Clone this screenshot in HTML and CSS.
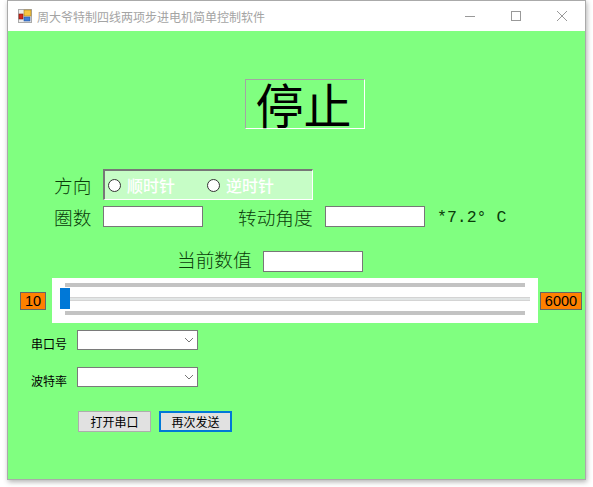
FILE: index.html
```html
<!DOCTYPE html>
<html>
<head>
    <meta charset="utf-8">
    <link rel="stylesheet" href="styles.css">
</head>
<body>
    <div class="window">
        <div class="titlebar">
            <svg class="app-icon" width="14" height="14" viewBox="0 0 14 14">
                <rect x="0.5" y="0.5" width="13" height="13" fill="#ececec" stroke="#aaa"/>
                <rect x="6" y="1" width="7" height="6" fill="#f5c542" stroke="#a87f1c" stroke-width="0.6"/>
                <rect x="1" y="5" width="4" height="5" fill="#d42a1e" stroke="#7d1510" stroke-width="0.6"/>
                <rect x="6" y="8" width="6" height="4" fill="#3f7fdc" stroke="#2a559a" stroke-width="0.6"/>
            </svg>
            <span class="title">周大爷特制四线两项步进电机简单控制软件</span>
            <div class="win-buttons">
                <svg width="11" height="12" viewBox="0 0 11 12"><path d="M0 6.5H10" stroke="#999" fill="none"/></svg>
                <svg width="11" height="12" viewBox="0 0 11 12"><rect x="0.5" y="1.5" width="9" height="9" stroke="#999" fill="none"/></svg>
                <svg width="11" height="12" viewBox="0 0 11 12"><path d="M0 1L10 11M10 1L0 11" stroke="#999" fill="none"/></svg>
            </div>
        </div>

        <div class="form">
            <div class="stop-row">
                <div class="stop-btn">停止</div>
            </div>

            <div class="row direction-row">
                <span class="label dir-label">方向</span>
                <div class="radio-group">
                    <span class="radio"></span><span class="radio-text">顺时针</span>
                    <span class="radio second"></span><span class="radio-text">逆时针</span>
                </div>
            </div>

            <div class="row turns-row">
                <span class="label dir-label">圈数</span>
                <input class="field" type="text">
                <span class="label angle-label">转动角度</span>
                <input class="field" type="text">
                <span class="label unit">*7.2° C</span>
            </div>

            <div class="row current-row">
                <span class="label">当前数值</span>
                <input class="field" type="text">
            </div>

            <div class="slider-row">
                <div class="limit">10</div>
                <div class="slider">
                    <div class="ticks"></div>
                    <div class="track"><div class="thumb"></div></div>
                    <div class="ticks"></div>
                </div>
                <div class="limit wide">6000</div>
            </div>

            <div class="row port-row">
                <span class="small-label">串口号</span>
                <div class="combo">
                    <svg width="10" height="6" viewBox="0 0 10 6"><path d="M1 1L5 5L9 1" stroke="#777" fill="none"/></svg>
                </div>
            </div>
            <div class="row baud-row">
                <span class="small-label">波特率</span>
                <div class="combo">
                    <svg width="10" height="6" viewBox="0 0 10 6"><path d="M1 1L5 5L9 1" stroke="#777" fill="none"/></svg>
                </div>
            </div>

            <div class="row button-row">
                <div class="button">打开串口</div>
                <div class="button focused">再次发送</div>
            </div>
        </div>
    </div>
</body>
</html>
```

FILE: styles.css
```css
html, body {
    margin: 0;
    background: #fff;
}

body {
    width: 593px;
    height: 487px;
    overflow: hidden;
    font-family: "Noto Sans CJK SC", "Liberation Sans", sans-serif;
}

.window {
    box-sizing: border-box;
    width: 579px;
    height: 480px;
    margin-left: 7px;
    border: 1px solid #aaa;
    box-shadow: 1px 2px 5px rgba(0, 0, 0, 0.3);
    display: flex;
    flex-direction: column;
}

.titlebar {
    height: 30px;
    flex: none;
    background: #fff;
    display: flex;
    align-items: center;
    padding-left: 10px;
}

.app-icon {
    margin-right: 5px;
}

.title {
    font-size: 12px;
    color: #a4a4a4;
}

.win-buttons {
    margin-left: auto;
    display: flex;
    gap: 35px;
    padding-right: 17px;
}

.form {
    flex: 1;
    background: #80ff80;
    display: flex;
    flex-direction: column;
}

.stop-row {
    padding: 48px 0 0 237px;
}

.stop-btn {
    box-sizing: border-box;
    width: 120px;
    height: 50px;
    padding-right: 3px;
    border: 1px solid;
    border-color: #a4a4a4 #fff #fff #a4a4a4;
    font-size: 48px;
    line-height: 46px;
    text-align: center;
    color: #000;
}

.row {
    display: flex;
    align-items: center;
}

.label {
    font-size: 18.67px;
    line-height: 20px;
    font-weight: 300;
    color: #0a3c0a;
    white-space: nowrap;
}

.direction-row {
    margin-top: 40px;
    padding-left: 46px;
}

.dir-label {
    width: 49px;
}

.radio-group {
    box-sizing: border-box;
    width: 210px;
    height: 31px;
    background: #c6fdc6;
    border: 1px solid;
    border-color: #777 #fff #fff #777;
    border-top-width: 2px;
    border-left-width: 2px;
    display: flex;
    align-items: center;
    padding-left: 3px;
}

.radio {
    box-sizing: border-box;
    width: 13px;
    height: 13px;
    border: 1px solid #333;
    border-radius: 50%;
    background: #fff;
}

.radio.second {
    margin-left: 26px;
}

.radio-text {
    margin-left: 6px;
    width: 54px;
    font-size: 16px;
    line-height: 20px;
    font-weight: 500;
    color: #fff;
}

.field {
    box-sizing: border-box;
    width: 100px;
    height: 21px;
    margin: 0;
    padding: 0;
    background: #fff;
    border: 1px solid #777;
    border-radius: 0;
}

.turns-row {
    margin-top: 6px;
    padding-left: 46px;
}

.angle-label {
    margin: 0 11px 0 35px;
    width: 76px;
}

.unit {
    margin-left: 12px;
    padding-top: 2px;
    line-height: 18px;
    font-size: 16.5px;
    font-family: "Liberation Mono", monospace;
    font-weight: 400;
}

.current-row {
    margin-top: 24px;
    padding-left: 169px;
    align-items: flex-start;
}

.current-row .label {
    margin-right: 11px;
    line-height: 16px;
}

.slider-row {
    margin-top: 6px;
    padding-left: 12px;
    display: flex;
    align-items: center;
}

.limit {
    box-sizing: border-box;
    width: 26px;
    height: 18px;
    background: #ff8000;
    border: 1px solid #666;
    font-size: 14.5px;
    line-height: 16px;
    text-align: center;
    font-family: "Liberation Sans", sans-serif;
    color: #000;
}

.limit.wide {
    width: 42px;
    margin-left: 2px;
}

.slider {
    box-sizing: border-box;
    width: 486px;
    height: 45px;
    margin-left: 6px;
    background: #fff;
    padding: 5px 13px 0;
    display: flex;
    flex-direction: column;
}

.ticks {
    height: 4px;
    background: #c3c3c3;
}

.track {
    position: relative;
    height: 4px;
    margin: 10px -5px;
    background: #e2e6e6;
    border: solid #d4d4d4;
    border-width: 1px 0;
    box-sizing: border-box;
}

.thumb {
    position: absolute;
    left: 0;
    top: -10px;
    width: 10px;
    height: 21px;
    background: #0078d7;
}

.small-label {
    width: 46px;
    font-size: 12px;
    line-height: 12px;
    color: #000;
    margin-top: 8px;
}

.combo {
    box-sizing: border-box;
    width: 121px;
    height: 20px;
    background: #fff;
    border: 1px solid #7a7a7a;
    display: flex;
    align-items: center;
    justify-content: flex-end;
    padding-right: 3px;
}

.port-row {
    margin-top: 7px;
    padding-left: 23px;
}

.baud-row {
    margin-top: 17px;
    padding-left: 23px;
}

.button-row {
    margin-top: 24px;
    padding-left: 70px;
    gap: 8px;
}

.button {
    box-sizing: border-box;
    width: 73px;
    height: 21px;
    background: #e1e1e1;
    border: 1px solid #adadad;
    font-size: 12px;
    line-height: 19px;
    text-align: center;
    color: #000;
}

.button.focused {
    border: 2px solid #0078d7;
    line-height: 17px;
}
```
